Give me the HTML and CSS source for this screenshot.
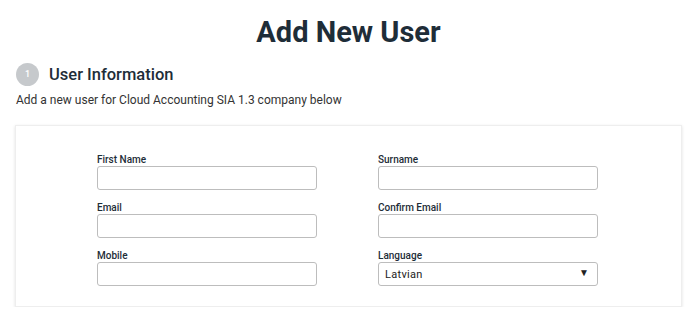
FILE: index.html
```html
<!DOCTYPE html>
<html lang="en">
<head>
    <meta charset="UTF-8">
    <meta name="viewport" content="width=device-width, initial-scale=1.0">
    <title>Add New User</title>
    <link rel="stylesheet" href="styles.css">
</head>
<body>
    <h1>Add New User</h1>
    <div class="step">
        <span class="step-num">1</span>
        <h2>User Information</h2>
    </div>
    <p class="intro">Add a new user for Cloud Accounting SIA 1.3 company below</p>

    <div class="card">
        <form id="userForm" class="form-grid">
            <div class="form-group">
                <label for="firstName">First Name</label>
                <input type="text" id="firstName" name="firstName">
            </div>
            <div class="form-group">
                <label for="surname">Surname</label>
                <input type="text" id="surname" name="surname">
            </div>
            <div class="form-group">
                <label for="email">Email</label>
                <input type="email" id="email" name="email">
            </div>
            <div class="form-group">
                <label for="confirmEmail">Confirm Email</label>
                <input type="email" id="confirmEmail" name="confirmEmail">
            </div>
            <div class="form-group">
                <label for="mobile">Mobile</label>
                <input type="text" id="mobile" name="mobile">
            </div>
            <div class="form-group">
                <label for="language">Language</label>
                <div class="select-wrap">
                    <select id="language" name="language">
                        <option>Latvian</option>
                        <option>English</option>
                    </select>
                </div>
            </div>
        </form>
    </div>
</body>
</html>
```

FILE: styles.css
```css
body {
    font-family: Roboto, "Liberation Sans", sans-serif;
    margin: 0;
    padding: 0 10px 0 15px;
    background-color: #fff;
    color: #1e2d38;
}
h1 {
    font-size: 29px;
    font-weight: 700;
    text-align: center;
    margin: 0;
    padding-top: 14px;
    height: 48px;
    line-height: 36px;
}
.step {
    display: flex;
    align-items: center;
    gap: 10px;
    margin-left: 1px;
    height: 24px;
}
.step-num {
    width: 23px;
    height: 23px;
    border-radius: 50%;
    background-color: #c6c9cc;
    color: #fff;
    font-size: 9px;
    font-weight: 500;
    display: flex;
    align-items: center;
    justify-content: center;
}
h2 {
    font-size: 16.5px;
    font-weight: 500;
    margin: 0;
}
.intro {
    font-size: 12px;
    color: #333;
    margin: 7px 0 0 1px;
    line-height: 14px;
}
.card {
    margin-top: 18px;
    background: #fff;
    border: 1px solid #eee;
    box-shadow: 0 1px 3px rgba(0, 0, 0, 0.12);
    padding: 28px 0 20px 81px;
}
.form-grid {
    display: grid;
    grid-template-columns: 220px 220px;
    column-gap: 61px;
    row-gap: 12px;
}
.form-group label {
    display: block;
    font-size: 10px;
    font-weight: 500;
    margin-bottom: 1px;
    line-height: 11px;
}
input, select {
    box-sizing: border-box;
    width: 220px;
    height: 24px;
    border: 1px solid #bdbdbd;
    border-radius: 3px;
    font-family: inherit;
    font-size: 11px;
    padding: 0 6px;
    background: #fff;
    color: #222;
}
select {
    appearance: none;
    -webkit-appearance: none;
    letter-spacing: 0.3px;
}
.select-wrap {
    position: relative;
}
.select-wrap::after {
    content: "▼";
    position: absolute;
    right: 9px;
    top: 5px;
    font-size: 10px;
    color: #222;
    pointer-events: none;
}
```
